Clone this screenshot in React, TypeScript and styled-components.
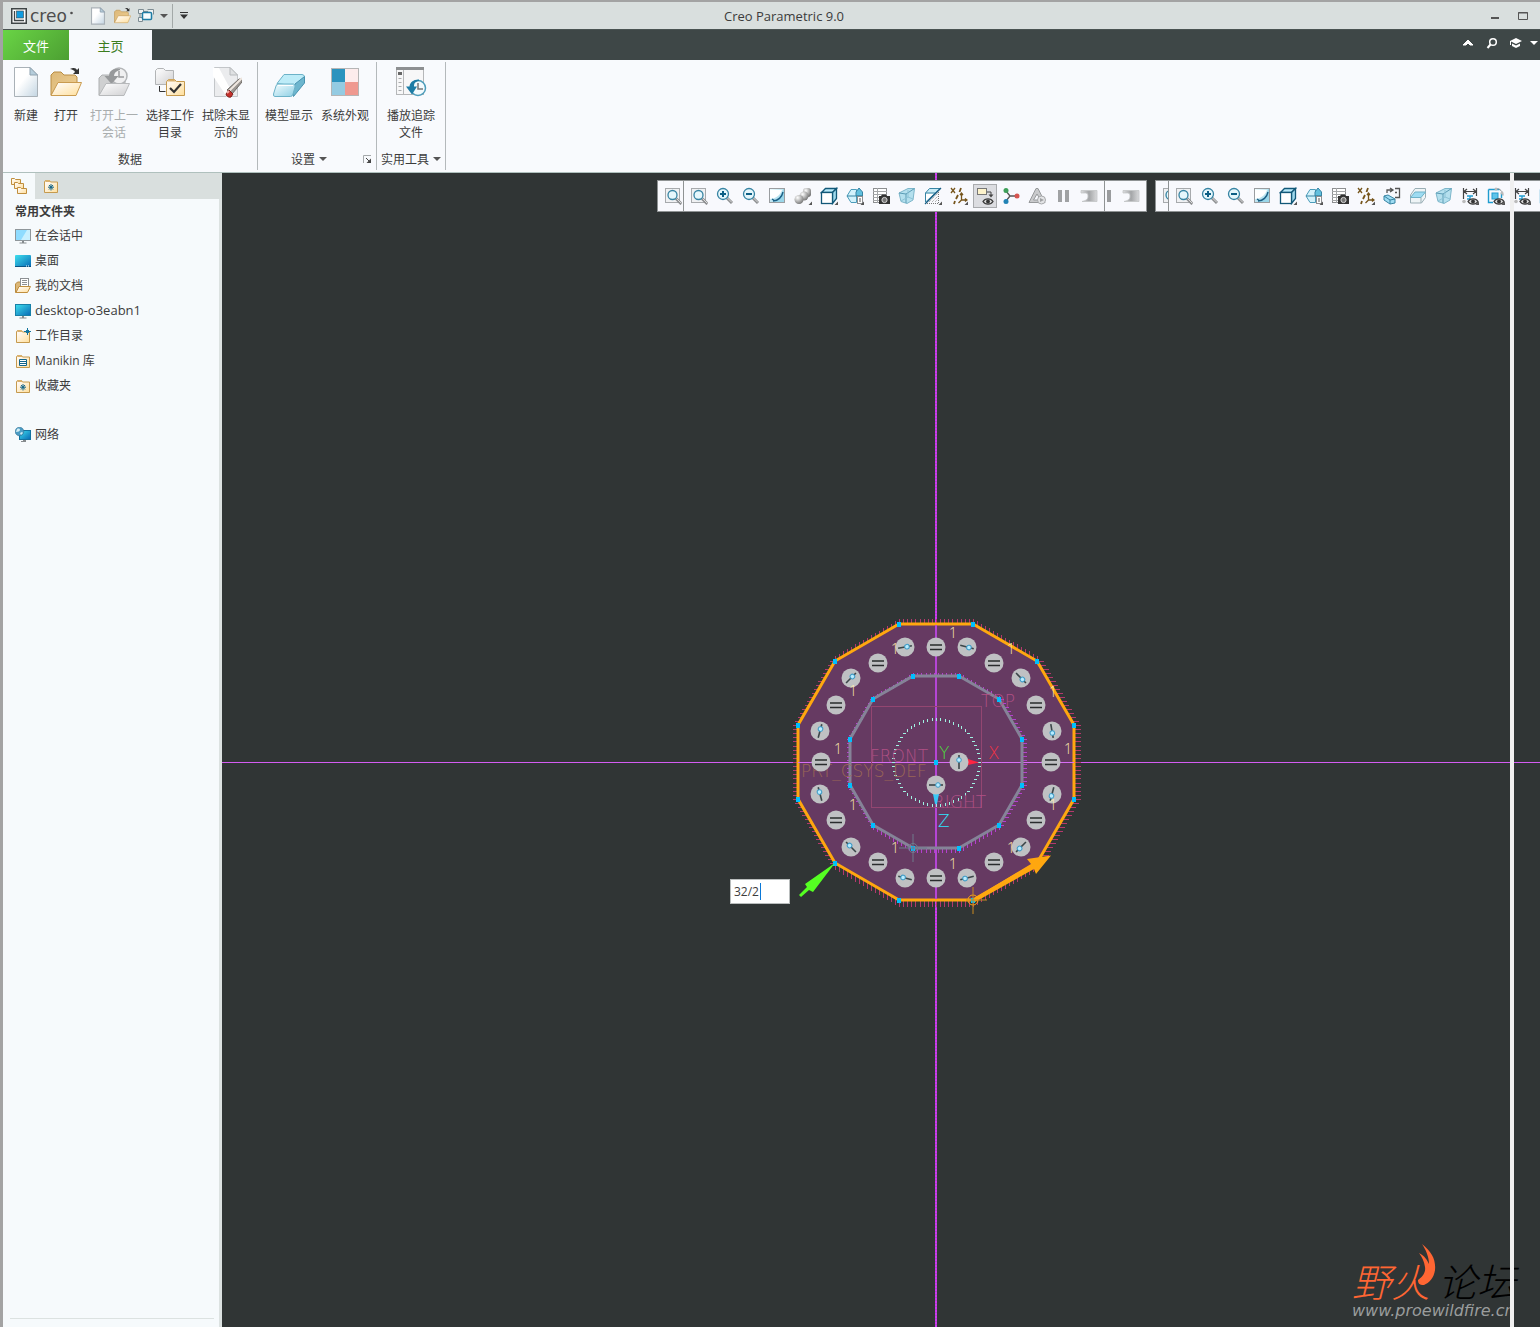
import React from "react";
import styled, { createGlobalStyle } from "styled-components";

const uiFont = `"Open Sans", "Noto Sans CJK SC", sans-serif`;

const GlobalStyle = createGlobalStyle`
  * { box-sizing: border-box; }
  body { margin: 0; font-family: ${uiFont}; font-size: 12px; color: #3c3c3c; }
  button { font: inherit; color: inherit; background: none; border: 0; padding: 0; margin: 0; }
  svg { display: block; flex: none; }
`;

/* ---------- frame ---------- */

const Window = styled.div`
  display: flex;
  flex-direction: column;
  min-height: 100vh;
  border-left: 3px solid #a3a3a3;
  border-top: 2px solid #a3a3a3;
  background: #f8fafd;
  overflow: hidden;
`;

const TitleBar = styled.header`
  display: flex;
  align-items: center;
  height: 28px;
  background: #d9dfde;
  border-bottom: 1px solid #4a5352;
`;

const Brand = styled.div`
  display: flex;
  align-items: center;
  gap: 3px;
  width: 85px;
  padding-left: 8px;
`;

const BrandName = styled.span`
  font-family: "DejaVu Sans", sans-serif;
  font-size: 17px;
  line-height: 20px;
  color: #4d4d4d;
`;

const QuickBar = styled.div`
  display: flex;
  align-items: center;
  gap: 4px;
  width: 102px;
`;

const QuickButton = styled.button<{ $narrow?: boolean }>`
  display: flex;
  flex: none;
  align-items: center;
  justify-content: center;
  width: ${(p) => (p.$narrow ? 8 : 20)}px;
  height: 24px;
`;

const QuickDivider = styled.span`
  flex: none;
  width: 1px;
  height: 24px;
  margin-right: 3px;
  background: #a3a9a8;
`;

const WindowTitle = styled.h1`
  flex: 1;
  margin: 0;
  font-size: 13px;
  font-weight: 400;
  text-align: center;
  line-height: 20px;
`;

const WindowButtons = styled.div`
  display: flex;
  justify-content: flex-end;
  gap: 8px;
  width: 162px;
  padding-right: 7px;
`;

const TabBar = styled.nav`
  display: flex;
  height: 30px;
  background: #3e4747;
`;

const FileTab = styled.button`
  width: 66px;
  font-size: 13px;
  color: #fff;
  background: linear-gradient(135deg, #69d445, #4c9f32);
`;

const HomeTab = styled.button`
  width: 83px;
  font-size: 13px;
  color: #3c7d1f;
  background: #f8fafd;
`;

const TabTools = styled.div`
  display: flex;
  align-items: center;
  gap: 4px;
  margin-left: auto;
  padding: 0 2px 4px 0;
`;

/* ---------- ribbon ---------- */

const Ribbon = styled.section`
  display: flex;
  align-items: stretch;
  height: 113px;
  padding: 2px 0;
  border-bottom: 1px solid #afc0bd;
`;

const Group = styled.div<{ $pad?: number }>`
  display: flex;
  flex-direction: column;
  justify-content: space-between;
  padding: 0 ${(p) => p.$pad ?? 3}px;
  border-right: 1px solid #b4b9bb;
`;

const GroupItems = styled.div`
  display: flex;
  justify-content: center;
`;

const Tool = styled.button<{ $wide?: boolean }>`
  display: flex;
  flex-direction: column;
  align-items: center;
  gap: 9px;
  width: ${(p) => (p.$wide ? 56 : 40)}px;
  padding-top: 4px;
  line-height: 17px;
  &:disabled { color: #a9adae; }
`;

const ToolLabel = styled.span`
  width: 48px;
`;

const GroupFooter = styled.div`
  display: flex;
  align-items: center;
  height: 20px;
  padding-bottom: 2px;
`;

const GroupName = styled.span`
  display: flex;
  flex: 1;
  align-items: center;
  justify-content: center;
  gap: 4px;
  line-height: 17px;
`;

const Launcher = styled.button`
  width: 16px;
  height: 10px;
  padding-left: 6px;
`;

/* ---------- body ---------- */

const Body = styled.main`
  display: flex;
  flex: 1;
`;

const Sidebar = styled.aside`
  display: flex;
  flex-direction: column;
  width: 219px;
  background: #f6fafc;
`;

const SideTabs = styled.div`
  display: flex;
  height: 26px;
  background: #d9dfde;
`;

const SideTab = styled.button<{ $active?: boolean }>`
  display: flex;
  align-items: center;
  justify-content: center;
  width: 32px;
  background: ${(p) => (p.$active ? "#f6fafc" : "transparent")};
`;

const SideContent = styled.div`
  display: flex;
  flex: 1;
  flex-direction: column;
  padding: 2px 5px 8px 7px;
  border-right: 3px solid #dce2e1;
`;

const SideHeading = styled.h2`
  margin: 0;
  padding-left: 5px;
  font-size: 12px;
  font-weight: 700;
  line-height: 22px;
`;

const FolderList = styled.ul`
  margin: 0 0 24px;
  padding: 0 0 0 5px;
  list-style: none;
`;

const FolderButton = styled.button`
  display: flex;
  align-items: center;
  gap: 4px;
  height: 25px;
  font-size: 12px;
`;

const FolderName = styled.span<{ $latin?: boolean }>`
  font-size: ${(p) => (p.$latin ? 13 : 12)}px;
  line-height: 25px;
`;

const SideRule = styled.hr`
  width: 100%;
  margin: auto 0 0;
  border: 0;
  border-top: 1px solid #dce2e1;
`;

/* ---------- graphics area ---------- */

const Viewport = styled.section`
  position: relative;
  flex: 1;
  overflow: hidden;
  background: #303535;
`;

const Scene = styled.svg`
  position: absolute;
  inset: 0;
  width: 100%;
  height: 100%;
`;

const Toolbars = styled.div`
  position: absolute;
  top: 7px;
  left: 435px;
  display: flex;
  gap: 8px;
`;

const Toolbar = styled.div`
  display: flex;
  flex: none;
  height: 32px;
  background: #f8f9fd;
  border: 1px solid #8f9394;
`;

const Segment = styled.div<{ $clip?: number }>`
  display: flex;
  flex: none;
  align-items: center;
  padding: 0 2px;
  ${(p) => (p.$clip ? `width: ${p.$clip}px; overflow: hidden;` : "")}
  & + & { border-left: 1px solid #8f9394; }
`;

const ViewButton = styled.button<{ $pressed?: boolean }>`
  display: flex;
  flex: none;
  align-items: center;
  justify-content: center;
  width: 24px;
  height: 24px;
  margin: 0 1px;
  background: ${(p) => (p.$pressed ? "#dcdde1" : "none")};
  box-shadow: ${(p) => (p.$pressed ? "inset 0 0 0 1px #a9abae" : "none")};
`;

const CutBar = styled.span`
  width: 4px;
  height: 12px;
  margin-right: 7px;
  background: #9a9c9e;
`;

const EdgeStrip = styled.div`
  position: absolute;
  top: 0;
  bottom: 0;
  right: 26px;
  width: 4px;
  background: #f0f0f0;
`;

const ValueBox = styled.label`
  position: absolute;
  left: 508px;
  top: 706px;
  display: flex;
  width: 60px;
  height: 25px;
`;

const ValueInput = styled.input`
  width: 100%;
  padding: 0 3px;
  font-family: ${uiFont};
  font-size: 12px;
  color: #3c3c3c;
  background: #fff;
  border: 1px solid #b9bdbd;
  outline: none;
`;

const Caret = styled.span`
  position: absolute;
  left: 30px;
  top: 4px;
  width: 1px;
  height: 17px;
  background: #0a78d7;
`;

const Watermark = styled.div`
  position: absolute;
  right: 24px;
  bottom: 7px;
  display: flex;
  flex-direction: column;
  font-style: italic;
`;

const MarkWords = styled.div`
  display: flex;
  gap: 8px;
  font-family: "Noto Sans CJK SC", sans-serif;
  font-size: 39px;
  font-weight: 300;
  line-height: 44px;
`;

const MarkWord = styled.span<{ $hot?: boolean }>`
  color: ${(p) => (p.$hot ? "#ff6633" : "#000")};
`;

const MarkFlame = styled.svg`
  position: absolute;
  left: 63px;
  top: -14px;
`;

const MarkUrl = styled.span`
  font-family: "DejaVu Sans", sans-serif;
  font-size: 16px;
  line-height: 18px;
  color: #9a9d9d;
`;

/* ---------- icons ---------- */

const Gradients = () => (
  <svg width="0" height="0" style={{ position: "absolute" }} aria-hidden="true">
    <defs>
      <linearGradient id="gPage" x1="0" y1="0" x2="1" y2="1">
        <stop offset="0.4" stopColor="#fff" /><stop offset="1" stopColor="#c3d5e2" />
      </linearGradient>
      <linearGradient id="gFolder" x1="0" y1="0" x2="1" y2="1">
        <stop offset="0.2" stopColor="#fff8ee" /><stop offset="1" stopColor="#ffdf9b" />
      </linearGradient>
      <linearGradient id="gBack" x1="0" y1="0" x2="1" y2="1">
        <stop offset="0" stopColor="#dcb878" /><stop offset="1" stopColor="#efcf94" />
      </linearGradient>
      <linearGradient id="gGrey" x1="0" y1="0" x2="1" y2="1">
        <stop offset="0.2" stopColor="#f6f6f7" /><stop offset="1" stopColor="#cfcfd1" />
      </linearGradient>
      <linearGradient id="gMute" x1="0" y1="0" x2="1" y2="0">
        <stop offset="0" stopColor="#dcdddf" /><stop offset="0.5" stopColor="#a3a5a7" /><stop offset="1" stopColor="#d8d9db" />
      </linearGradient>
      <linearGradient id="gSky" x1="0" y1="0" x2="1" y2="1">
        <stop offset="0" stopColor="#f4fdff" /><stop offset="1" stopColor="#8ccfe4" />
      </linearGradient>
      <linearGradient id="gScreen" x1="0" y1="0" x2="1" y2="1">
        <stop offset="0" stopColor="#3fe0ee" /><stop offset="1" stopColor="#0769b5" />
      </linearGradient>
      <radialGradient id="gBall" cx="0.35" cy="0.3" r="0.8">
        <stop offset="0" stopColor="#fff" /><stop offset="1" stopColor="#6b6b6b" />
      </radialGradient>
    </defs>
  </svg>
);

type IconProps = { size?: number };

const PageIcon = ({ size = 32 }: IconProps) => (
  <svg width={size} height={size} viewBox="0 0 32 32">
    <path d="M4.5 1.5H20l7.5 7.5V30.5H4.5z" fill="url(#gPage)" stroke="#a9b1b7" strokeWidth={size > 20 ? 1 : 2} />
    <path d="M20 1.5V9h7.5z" fill="#b5cddb" stroke="#8fa3b0" strokeWidth={size > 20 ? 1 : 1.6} />
  </svg>
);

const OpenIcon = ({ size = 32 }: IconProps) => (
  <svg width={size} height={size} viewBox="0 0 32 32">
    <path d="M1 29V9l3-3h7l3 3h11l2 2v6H9z" fill="url(#gBack)" stroke="#b98c42" />
    <path d="M8 16.5h23.5L26 29.5H1z" fill="url(#gFolder)" stroke="#c99b50" />
    <path d="M20 3c4-2 6-1 7 1l2-2v6h-6l2-2c-1-2-2-2-5-3z" fill="#333" />
  </svg>
);

const ReopenIcon = () => (
  <svg width="32" height="32" viewBox="0 0 32 32">
    <path d="M1 29V12l3-3h7l3 3h13v6H9z" fill="#cfd0d1" stroke="#aeb0b2" />
    <circle cx="21" cy="10" r="8" fill="#f0f0f1" stroke="#b3b5b7" strokeWidth="1.5" />
    <path d="M21 5v6h5" fill="none" stroke="#9a9c9e" strokeWidth="1.5" />
    <path d="M22 3C15 2 11 5 11 10H6.5l7 8 7-8H16c0-3 2-5 6-6z" fill="#97999b" />
    <path d="M8 17.5h23.5L26 29.5H1z" fill="url(#gGrey)" stroke="#b7b9bb" />
  </svg>
);

const WorkDirIcon = () => (
  <svg width="32" height="32" viewBox="0 0 32 32">
    <path d="M1.5 18.5v-14l2-2h6l2 2h8v14z" fill="url(#gGrey)" stroke="#b2b4b6" />
    <path d="M5.5 20v5.5h6" fill="none" stroke="#333" />
    <path d="M12.5 29.5v-14l2-2h6l2 2h8v14z" fill="url(#gFolder)" stroke="#c59a4e" />
    <path d="M13 15.5l2-2h5l2 2z" fill="#d9b06c" />
    <path d="M16 22l4 4 7-8" fill="none" stroke="#333" strokeWidth="2.2" />
  </svg>
);

const EraseIcon = () => (
  <svg width="32" height="32" viewBox="0 0 32 32">
    <path d="M4.5 1.5H20l7.5 7.5V30.5H4.5z" fill="#ebecee" stroke="#c3c6c9" />
    <path d="M20 1.5V9h7.5z" fill="#dfe1e3" stroke="#b7babd" />
    <path d="M3 2h6l14 26-6 3L3 10z" fill="#fff" />
    <path d="M29 13h3v3L22 28l-5-4z" fill="#9b9793" stroke="#6f6a66" />
    <path d="M32 12L19 25" stroke="#efe7e0" strokeWidth="2" />
    <path d="M19 24l4 4-2 3c-2 1-5-1-5-3z" fill="#c4302b" stroke="#7d2320" />
    <path d="M17 27l2-2" stroke="#f3b0aa" strokeWidth="2" />
  </svg>
);

const ModelIcon = () => (
  <svg width="32" height="32" viewBox="0 0 32 32">
    <path d="M11 8.5h18q2 0 2.5 2L22 20 4 17.5z" fill="#bdecf8" stroke="#6cb2c8" />
    <path d="M31.5 10.5V17L20.5 30.5l-1-6L22 18z" fill="#6db6ce" stroke="#4a94b0" />
    <path d="M5 18h15.5q2 0 1.5 3l-2 7q-.5 2.5-2.5 2.5H2q-2 0-1.5-2.5l2.5-8q.5-2 2-2z" fill="url(#gSky)" stroke="#6cb2c8" />
    <path d="M5 19.5h15" stroke="#fff" />
  </svg>
);

const AppearanceIcon = () => (
  <svg width="32" height="32" viewBox="0 0 32 32" shapeRendering="crispEdges">
    <rect x="2" y="2" width="28" height="28" fill="#b5b5b5" />
    <rect x="3" y="3" width="13" height="13" fill="#2c93be" />
    <rect x="16" y="3" width="13" height="13" fill="#fdecec" />
    <rect x="3" y="16" width="13" height="13" fill="#94cbe2" />
    <rect x="16" y="16" width="13" height="13" fill="#ef9990" />
  </svg>
);

const TrailIcon = () => (
  <svg width="32" height="32" viewBox="0 0 32 32">
    <rect x="1.5" y="1.5" width="27" height="27" fill="#f7f7f8" stroke="#b5b7b9" />
    <rect x="1" y="1" width="28" height="3" fill="#8d8f91" />
    <path d="M8.5 4v24" stroke="#b5b7b9" />
    <path d="M3.5 12.5h3M3.5 16.5h3M3.5 20.5h3M3.5 24.5h3" stroke="#a9abad" />
    <rect x="3" y="6" width="4" height="3" fill="#666" />
    <circle cx="23" cy="22" r="7.5" fill="#f2fafd" stroke="#4b9cba" strokeWidth="1.5" />
    <path d="M23 17v6h5" fill="none" stroke="#777" strokeWidth="1.5" />
    <path d="M24 13.5c-6 0-9 3-9.5 7H11l6 8 5-8h-3c0-3 1-5 5-5.5z" fill="#1d7ca5" />
  </svg>
);

const WindowsIcon = () => (
  <svg width="16" height="16" viewBox="0 0 16 16">
    <path d="M.5 1.5h5v4h-5zM9.5 1.5h6v5M.5 9.5h4v4h-4z" fill="#eef1f2" stroke="#7d8c92" />
    <path d="M2 5.5v4M5 3.5h5" stroke="#7d8c92" />
    <rect x="4.5" y="4.5" width="9" height="7" rx="1" fill="#f4fbfd" stroke="#1d7ca5" strokeWidth="1.5" />
  </svg>
);

const CaretDown = ({ size = 8, color = "#555" }: { size?: number; color?: string }) => (
  <svg width={size} height="4" viewBox="0 0 8 4"><path d="M0 0h8L4 4z" fill={color} /></svg>
);

const MiniFolder = ({ children }: { children?: React.ReactNode }) => (
  <svg width="16" height="16" viewBox="0 0 16 16">
    <path d="M1.5 14.5V3.5l1-1h4l1 1.5h7v10.5z" fill="url(#gFolder)" stroke="#c59a4e" />
    <path d="M2 4l1-2h3.5L8 4z" fill="#d9b06c" />
    {children}
  </svg>
);

const Asterisk = () => (
  <path d="M8 6v6.5M5 9.2h6M6 7l4 4.5M10 7l-4 4.5" stroke="#12658a" strokeWidth="1" />
);

const TreeIcon = () => (
  <svg width="18" height="18" viewBox="0 0 18 18">
    {[[1, 1], [4, 5], [7, 10]].map(([x, y]) => (
      <path key={x} transform={`translate(${x} ${y})`} d="M.5 6.5v-6h3l1 1h5v5z" fill="url(#gFolder)" stroke="#c08f3e" />
    ))}
  </svg>
);

const MonitorIcon = ({ light }: { light?: boolean }) => (
  <svg width="16" height="16" viewBox="0 0 16 16">
    <rect x=".5" y="1.5" width="15" height="11" fill={light ? "#8fdcff" : "url(#gScreen)"} stroke={light ? "#8f979b" : "#1780a8"} />
    {light && <path d="M6 12l6-10h3v10z" fill="#c8f0ff" />}
    <path d="M7 13h2v1.5h2.5v1h-7v-1H7z" fill="#868b8e" />
  </svg>
);

const DesktopIcon = () => (
  <svg width="16" height="16" viewBox="0 0 16 16">
    <rect x="0" y="2" width="16" height="12" rx="1" fill="url(#gScreen)" />
    <path d="M0 13.5h16" stroke="#0b5484" />
    <path d="M11 13h1M13 13h1" stroke="#fff" />
  </svg>
);

const DocsIcon = () => (
  <svg width="16" height="16" viewBox="0 0 16 16">
    <path d="M.5 14.5V6l2-2h3v5z" fill="#dcb878" stroke="#b98c42" />
    <rect x="5.5" y=".5" width="8" height="9" fill="#fff" stroke="#8c9093" />
    <path d="M7 2.5h5M7 4.5h5M7 6.5h5" stroke="#8c9093" />
    <path d="M4 8.5h11.5l-3 6H1z" fill="url(#gFolder)" stroke="#c08f3e" />
  </svg>
);

const NetworkIcon = () => (
  <svg width="16" height="16" viewBox="0 0 16 16">
    <rect x="4.5" y="3.5" width="11" height="9" fill="url(#gScreen)" stroke="#1273a0" />
    <path d="M8 13h3v2H6v-1h2z" fill="#868b8e" />
    <circle cx="4.5" cy="4.5" r="4.3" fill="#4a9cc4" stroke="#2f6f92" strokeWidth=".6" />
    <path d="M2 2c2-1 3 0 3 1S3 5 1 5zM5 6l2-1 1 1-2 2z" fill="#d4eef5" />
  </svg>
);

/* View toolbar glyphs, drawn on an 18px grid */

const Lens = ({ cx, cy, r = 5 }: { cx: number; cy: number; r?: number }) => (
  <>
    <path d={`M${cx + 3.5} ${cy + 3.5}l5.5 5.5`} stroke="#8d8f91" strokeWidth="3" />
    <path d={`M${cx + 4} ${cy + 3.5}l5 5`} stroke="#dcdcdc" strokeWidth="1" />
    <circle cx={cx} cy={cy} r={r} fill="#e6f7fc" stroke="#3784a3" strokeWidth="1.3" />
  </>
);

const Corner = () => <path d="M18 14.5v3.5h-3.5z" fill="#555" />;
const Eye = () => (
  <>
    <path d="M7 14.5c2-3.5 8-3.5 10 0-2 3.5-8 3.5-10 0z" fill="#d5d5d5" stroke="#3c3c3c" strokeWidth="1.3" />
    <circle cx="12" cy="14.5" r="1.9" fill="#333" />
  </>
);

const glyphs: Record<string, React.ReactNode> = {
  refit: (
    <>
      <rect x="1.5" y="1.5" width="14" height="14" fill="#f0f1f3" stroke="#a7aaad" />
      <Lens cx={8.5} cy={8} r={4.5} />
    </>
  ),
  zoomIn: (<><Lens cx={7} cy={7} r={5.5} /><path d="M4 7h6M7 4v6" stroke="#0d5f85" strokeWidth="2" /></>),
  zoomOut: (<><Lens cx={7} cy={7} r={5.5} /><path d="M4 7h6" stroke="#0d5f85" strokeWidth="2" /></>),
  repaint: (
    <>
      <rect x="1.5" y="1.5" width="15" height="14" fill="url(#gSky)" stroke="#9a9da0" />
      <path d="M2 3h12C12 8 9 11 2 12z" fill="#fff" />
      <path d="M16 2v13H5C11 14 15 9 15 2z" fill="#9ad6e9" />
      <path d="M5 14c5 0 9-4 10-9M4 12l3 2" fill="none" stroke="#1a5f85" strokeWidth="1.4" />
    </>
  ),
  shade: (
    <>
      <rect x="9" y="1" width="8" height="9" rx="3" fill="url(#gBall)" />
      <circle cx="10" cy="9" r="4.5" fill="url(#gBall)" />
      <circle cx="5" cy="12.5" r="4.5" fill="url(#gBall)" />
      <Corner />
    </>
  ),
  box: (
    <>
      <path d="M1.5 5.5l4-4h11l-4 4z" fill="#b9eafa" stroke="#125878" strokeWidth="1.3" />
      <path d="M12.5 5.5l4-4v10l-4 5z" fill="#9fd9ec" stroke="#125878" strokeWidth="1.3" />
      <rect x="1.5" y="5.5" width="11" height="11" fill="#fff" stroke="#125878" strokeWidth="1.3" />
      <Corner />
    </>
  ),
  saved: (
    <>
      <path d="M5 2.5h5.5v13H5L1 9z" fill="#d3f2fb" stroke="#4b9cba" />
      <path d="M10 9V5l3-4 3.5 4v4z" fill="#62c0de" stroke="#3784a3" />
      <path d="M1 9h15.5" stroke="#3784a3" />
      <rect x="11.5" y="9.5" width="5" height="7" fill="#fff" stroke="#8d8f91" />
      <path d="M13 12h2M13 14h2" stroke="#555" />
      <Corner />
    </>
  ),
  views: (
    <>
      <rect x="1.5" y="1.5" width="13" height="14" fill="#fff" stroke="#8d8f91" />
      <path d="M1 4.5h14M1 7.5h14M1 10.5h14M1 13.5h14M5.5 1v15" stroke="#a5a7a9" />
      <path d="M7 9h2l1-1.5h4L15 9h3v8H7z" fill="#333" />
      <circle cx="12.5" cy="13" r="2.6" fill="#777" stroke="#d5d5d5" />
    </>
  ),
  persp: (
    <>
      <path d="M1 6l9-4.5h6.5L15 13l-6 3.5-6-2z" fill="#b4e0ee" stroke="#7db6ca" />
      <path d="M1 6l7 1v9M8 7l8.5-5.5" fill="none" stroke="#5b9cb5" />
      <path d="M10 3v7l5 2M3 14l7-4" fill="none" stroke="#8cc3d6" />
    </>
  ),
  section: (
    <>
      <path d="M14.5 3v13.5H3" fill="none" stroke="#777" strokeDasharray="1 1" />
      <path d="M5 15l9-9M8 15l6-6M11 15l3-3" stroke="#999" strokeDasharray="1 1" />
      <path d="M1.5 15V6l4-4.5H16z" fill="#c9ecf7" stroke="#3784a3" />
      <path d="M2 6.5h8L2 14z" fill="#fff" />
      <path d="M1.5 6h9.5" stroke="#3784a3" />
      <path d="M1 17L17 1" stroke="#1a5f85" strokeWidth="1.3" />
      <Corner />
    </>
  ),
  datum: (
    <>
      <path d="M1 1l4 5M5 1L1 6" stroke="#76551c" strokeWidth="1.3" />
      <path d="M11 1L9.5 5M8 8l-2 4M5 14l-1 3" stroke="#76551c" strokeWidth="1.8" />
      <path d="M11.5 6v7H17M11.5 13l-3 3M10 8l1.5-2L13 8M15 11.5l2 1.5-2 1.5" fill="none" stroke="#76551c" strokeWidth="1.3" />
      <Corner />
    </>
  ),
  annot: (
    <>
      <rect x="1.5" y="1.5" width="9" height="6" fill="#fdf3cc" stroke="#777" />
      <path d="M11 5h4v4" fill="none" stroke="#444" /><path d="M12.5 7.5h5L15 10.5z" fill="#444" />
      <Eye />
    </>
  ),
  spin: (
    <>
      <path d="M4 4l4 5-4 5M8 9h6" fill="none" stroke="#555" strokeWidth="1.3" />
      <circle cx="4" cy="3.5" r="2.5" fill="#3fa05a" /><circle cx="15" cy="9" r="2.5" fill="#d65550" />
      <circle cx="4" cy="14.5" r="2.5" fill="#2283b5" />
    </>
  ),
  sim: (
    <>
      <path d="M8 1.5h2L17 15.5H1z" fill="#c9cacc" stroke="#97999b" />
      <path d="M9 7l3.5 6h-7z" fill="#f8f9fd" stroke="#97999b" />
      <circle cx="13.5" cy="13" r="4" fill="#e3e4e6" stroke="#a7a9ab" /><path d="M12 11l4 2-4 2z" fill="#a0a2a4" />
    </>
  ),
  pause: <path d="M4 3h4v12H4zM11 3h4v12h-4z" fill="#a0a2a4" />,
  resume: (
    <path d="M1 3.5h16v11H2c4-1 6-2 6-5.5S6 6 1 6z" fill="url(#gMute)" stroke="#c3c5c7" strokeWidth=".8" />
  ),
  orient: (
    <>
      <path d="M4 6V3h5M7 1l3 2-3 2M12 1.5h4.5v9H12M12 5.5h2" fill="none" stroke="#555" strokeWidth="1.3" />
      <path d="M1 9l4-1 7 4v4l-5 1-6-4z" fill="#9edcf2" stroke="#3784a3" />
      <path d="M1 9l6 4 5-1M7 13v4" fill="none" stroke="#3784a3" />
    </>
  ),
  slab: (
    <>
      <path d="M6 1.5h10.5v9l-4 5.5h-11V8z" fill="#eef4f6" stroke="#9aaeb5" />
      <path d="M1.5 10.5L6 5h10.5L12 10.5z" fill="#9edcf2" stroke="#6fb2c8" />
      <path d="M12 10.5V16" stroke="#9aaeb5" />
    </>
  ),
  dims: (
    <>
      <path d="M2.5 1v11M15.5 1v8M3 4.5h12M6 2L3 4.5 6 7M12 2l3 2.5L12 7" fill="none" stroke="#444" strokeWidth="1.2" />
      <path d="M6 9h6M9 9v3M6 12h3" fill="none" stroke="#1f9ccf" strokeWidth="1.3" />
      <circle cx="3" cy="14.5" r="1.8" fill="#bbb" />
      <Eye /><Corner />
    </>
  ),
  visible: (
    <>
      <path d="M1.5 2.5h11M1.5 2.5v13H6M14.5 6v5" fill="none" stroke="#1f9ccf" strokeWidth="1.4" />
      <rect x="5" y="6" width="6" height="6" fill="#5fc3ea" stroke="#1f9ccf" />
      <path d="M9 1.5c4 0 7 3 7 7" fill="none" stroke="#8d8f91" />
      <circle cx="9" cy="2" r="1.5" fill="#bbb" /><circle cx="15" cy="6" r="1.5" fill="#bbb" />
      <Eye /><Corner />
    </>
  ),
};

const Glyph = ({ name }: { name: string }) => (
  <svg width="18" height="18" viewBox="0 0 18 18">{glyphs[name]}</svg>
);

const graphicsTools = ["refit", "zoomIn", "zoomOut", "repaint", "shade", "box", "saved", "views", "persp", "section", "datum", "annot", "spin", "sim", "pause", "resume"];
const sketchTools = ["refit", "zoomIn", "zoomOut", "repaint", "box", "saved", "views", "datum", "orient", "slab", "persp", "dims", "visible", "dims", "visible"];

const ViewTools = ({ names }: { names: string[] }) => (
  <>
    {names.map((n, i) => (
      <ViewButton key={i} aria-label={n} $pressed={n === "annot"}><Glyph name={n} /></ViewButton>
    ))}
  </>
);

/* ---------- sketch geometry, centred on the origin ---------- */

type Pt = [number, number];

const ring = (a: number, b: number, c: number): Pt[] => [
  [a, -c], [b, -b], [c, -a], [c, a], [b, b], [a, c],
  [-a, c], [-b, b], [-c, a], [-c, -a], [-b, -b], [-a, -c],
];
const outer = ring(37, 101, 138);
const inner = ring(23, 63, 86);
const poly = (pts: Pt[]) => pts.map((p) => p.join(",")).join(" ");

const hatch = (pts: Pt[], step: number, len: number) =>
  pts.map(([x1, y1], i) => {
    const [x2, y2] = pts[(i + 1) % pts.length];
    const dx = x2 - x1;
    const dy = y2 - y1;
    const flat = Math.abs(dx) > Math.abs(dy);
    const n = Math.floor(Math.max(Math.abs(dx), Math.abs(dy)) / step);
    let d = "";
    for (let k = 0; k <= n; k++) {
      const x = Math.round(x1 + (dx * k) / n) + 0.5;
      const y = Math.round(y1 + (dy * k) / n) + 0.5;
      d += flat ? `M${x} ${y}v${y1 + y2 < 0 ? -len : len}` : `M${x} ${y}h${x1 + x2 < 0 ? -len : len}`;
    }
    return d;
  }).join("");

const dotted = Array.from({ length: 60 }, (_, i) => {
  const t = (i * Math.PI) / 30;
  const x = Math.round(43 * Math.cos(t)) + 0.5;
  const y = Math.round(43 * Math.sin(t)) + 0.5;
  return Math.abs(y) > Math.abs(x) ? `M${x} ${y - 1.5}v3` : `M${x - 1.5} ${y}h3`;
}).join("");

const equals: Pt[] = [
  [0, -115], [58, -99], [100, -57], [115, 0], [100, 58], [58, 100],
  [0, 116], [-58, 100], [-100, 58], [-115, 0], [-100, -57], [-58, -99],
];

const pins: [number, number, number][] = [
  [31, -115, 15], [85, -84, 45], [116, -31, 80], [116, 32, 105], [85, 85, 135], [31, 116, 165],
  [-31, 116, 195], [-85, 85, 225], [-116, 32, 255], [-116, -31, 285], [-85, -84, 315], [-31, -115, 350],
  [23, 0, 270], [0, 23, 0],
];

const ones: Pt[] = [
  [16, -125], [74, -109], [116, -66], [131, -9], [116, 47], [74, 90],
  [16, 106], [-42, 90], [-84, 47], [-99, -9], [-84, -67], [-42, -109],
];

const Label = styled.text<{ $tone: string }>`
  fill: ${(p) => p.$tone};
  font-family: "DejaVu Sans", sans-serif;
  font-weight: 200;
  font-size: 17px;
`;

const EdgeCount = styled.text`
  fill: #ffedb0;
  font-family: "Open Sans", sans-serif;
  font-weight: 300;
  font-size: 14px;
`;

const Sketch = () => (
  <Scene aria-label="sketch">
    <path d="M0 589.5H4000" stroke="#d45cf2" />
    <path d="M714 0V4000" stroke="#a94fc6" strokeWidth="2" />
    <path d="M714 0V4000" stroke="#d236f5" strokeWidth="2" strokeDasharray="2 1" />
    <g transform="translate(714 589)">
      <path d={hatch(outer, 4, 6)} stroke="#b5386c" shapeRendering="crispEdges" />
      <polygon points={poly(outer)} fill="#663a62" stroke="#ffa70f" strokeWidth="3" />
      <path d="M-138 .5H138" stroke="#d86cf5" />
      <path d="M0-137V137" stroke="#b545d6" strokeWidth="2" />
      <rect x="-64.5" y="-55.5" width="110" height="101" fill="none" stroke="#934671" />
      <path d={hatch(inner, 4, 4)} stroke="#b540cf" shapeRendering="crispEdges" />
      <polygon points={poly(inner)} fill="none" stroke="#858398" strokeWidth="3" />
      <path d={dotted} stroke="#9ff3e2" shapeRendering="crispEdges" />
      <Label x="45" y="-55" $tone="#b05085">TOP</Label>
      <Label x="-66" y="0" $tone="#b05085">FRONT</Label>
      <Label x="-3" y="46" $tone="#b05085">RIGHT</Label>
      <Label x="-135" y="15" $tone="#9a6656">PRT_CSYS_DEF</Label>
      <Label x="3" y="-3" $tone="#4ddc3c">Y</Label>
      <Label x="52" y="-3" $tone="#ec3345">X</Label>
      <Label x="2" y="65" $tone="#2fe3ff">Z</Label>
      <path d="M32-3L43 .5 32 3z" fill="#ff2442" />
      <path d="M-3 32h6L1 42h-2z" fill="#38c8f5" />
      {[...outer, ...inner, [0, 0] as Pt].map(([x, y], i) => (
        <rect key={i} x={x - 2} y={y - 2} width="4" height="5" fill="#00bfff" />
      ))}
      {equals.map(([x, y], i) => (
        <g key={i} transform={`translate(${x} ${y})`}>
          <circle r="9.5" fill="#bfc1c3" />
          <path d="M-6-2H6M-6 2.5H6" stroke="#292c2d" strokeWidth="1.6" />
        </g>
      ))}
      {pins.map(([x, y, a], i) => (
        <g key={i} transform={`translate(${x} ${y})`}>
          <circle r="9.5" fill="#bfc1c3" />
          <g transform={`rotate(${a})`}>
            <path d="M-7 0H7" stroke="#3b4649" strokeWidth="1.6" />
            <circle cx="2" r="2.3" fill="#b8ecff" stroke="#3f9cc7" />
          </g>
        </g>
      ))}
      {ones.map(([x, y], i) => (
        <EdgeCount key={i} x={x - 3} y={y + 1}>1</EdgeCount>
      ))}
      <g fill="none" stroke="#6f7b8c">
        <circle cx="-23" cy="86" r="4.5" />
        <path d="M-23 72v28M-37 86h28" />
      </g>
      <path d="M37 137L95 102 91 97 115 93.5 100 112 98 107 39 140z" fill="#ffa70f" />
      <circle cx="37" cy="138" r="5" fill="none" stroke="#ffa70f" />
      <path d="M37 125v27M30 138h21" stroke="#c98a20" />
      <path d="M-101 101L-131 122l2 3-8 8 2 2 8-7 4 2z" fill="#55ff22" />
    </g>
  </Scene>
);

/* ---------- page ---------- */

const folders: { name: string; icon: React.ReactNode; latin?: boolean }[] = [
  { name: "在会话中", icon: <MonitorIcon light /> },
  { name: "桌面", icon: <DesktopIcon /> },
  { name: "我的文档", icon: <DocsIcon /> },
  { name: "desktop-o3eabn1", icon: <MonitorIcon />, latin: true },
  {
    name: "工作目录",
    icon: <MiniFolder><path d="M12.5 0v7M9 3.5h7M11 2l3 3M14 2l-3 3" stroke="#12749c" /></MiniFolder>,
  },
  {
    name: "Manikin 库",
    icon: <MiniFolder><path d="M4.5 6.5h7v6h-7zM5 8.5h6M5 10.5h6" fill="#fff" stroke="#12658a" /></MiniFolder>,
  },
  { name: "收藏夹", icon: <MiniFolder><Asterisk /></MiniFolder> },
];

export default function App() {
  return (
    <Window>
      <GlobalStyle />
      <Gradients />
      <TitleBar>
        <Brand>
          <svg width="16" height="16" viewBox="0 0 16 16">
            <rect x=".75" y=".75" width="14.5" height="14.5" fill="#fff" stroke="#3f4647" strokeWidth="1.5" />
            <path d="M3.5 3v9.5H13" fill="none" stroke="#3f4647" strokeWidth="1.3" />
            <rect x="5.5" y="3" width="7" height="7" fill="#109be0" stroke="#3f4647" strokeWidth=".6" />
          </svg>
          <BrandName>creo</BrandName>
          <svg width="3" height="12" viewBox="0 0 3 12"><circle cx="1.5" cy="3" r="1.3" fill="#4d4d4d" /></svg>
        </Brand>
        <QuickBar>
          <QuickButton aria-label="新建文件"><PageIcon size={18} /></QuickButton>
          <QuickButton aria-label="打开文件"><OpenIcon size={17} /></QuickButton>
          <QuickButton aria-label="窗口"><WindowsIcon /></QuickButton>
          <QuickButton $narrow aria-label="窗口列表"><CaretDown /></QuickButton>
          <QuickDivider />
          <QuickButton $narrow aria-label="自定义">
            <svg width="8" height="7" viewBox="0 0 8 7"><path d="M0 0h8v1H0zM0 2.5h8L4 7z" fill="#333" /></svg>
          </QuickButton>
        </QuickBar>
        <WindowTitle>Creo Parametric 9.0</WindowTitle>
        <WindowButtons>
          <QuickButton aria-label="最小化">
            <svg width="10" height="10" viewBox="0 0 10 10"><path d="M1 7h8" stroke="#555" strokeWidth="2" /></svg>
          </QuickButton>
          <QuickButton aria-label="最大化">
            <svg width="10" height="10" viewBox="0 0 10 10"><path d="M.5 1.5h9v7h-9zM0 2h10" fill="none" stroke="#555" /></svg>
          </QuickButton>
        </WindowButtons>
      </TitleBar>
      <TabBar>
        <FileTab>文件</FileTab>
        <HomeTab>主页</HomeTab>
        <TabTools>
          <QuickButton aria-label="折叠">
            <svg width="12" height="8" viewBox="0 0 12 8"><path d="M1 6L6 1l5 5H8L6 4 4 6z" fill="#fff" stroke="#fff" /></svg>
          </QuickButton>
          <QuickButton aria-label="搜索">
            <svg width="12" height="12" viewBox="0 0 12 12"><circle cx="7" cy="5" r="3.3" fill="none" stroke="#fff" strokeWidth="1.5" /><path d="M4.5 7.5L1.5 11" stroke="#fff" strokeWidth="2" /></svg>
          </QuickButton>
          <QuickButton aria-label="学习">
            <svg width="14" height="10" viewBox="0 0 14 10"><path d="M7 0l6 3-6 3-6-3z" fill="#fff" /><path d="M3 5.5l4 2 4-2V8L7 10 3 8zM1 3h1v4H1z" fill="#fff" /></svg>
          </QuickButton>
          <QuickButton $narrow aria-label="更多"><CaretDown color="#fff" /></QuickButton>
        </TabTools>
      </TabBar>
      <Ribbon>
        <Group>
          <GroupItems>
            <Tool><PageIcon />新建</Tool>
            <Tool><OpenIcon />打开</Tool>
            <Tool $wide disabled><ReopenIcon /><ToolLabel>打开上一会话</ToolLabel></Tool>
            <Tool $wide><WorkDirIcon /><ToolLabel>选择工作目录</ToolLabel></Tool>
            <Tool $wide><EraseIcon /><ToolLabel>拭除未显示的</ToolLabel></Tool>
          </GroupItems>
          <GroupFooter><GroupName>数据</GroupName></GroupFooter>
        </Group>
        <Group>
          <GroupItems>
            <Tool $wide><ModelIcon /><ToolLabel>模型显示</ToolLabel></Tool>
            <Tool $wide><AppearanceIcon /><ToolLabel>系统外观</ToolLabel></Tool>
          </GroupItems>
          <GroupFooter>
            <GroupName>设置<CaretDown /></GroupName>
            <Launcher aria-label="设置选项">
              <svg width="9" height="9" viewBox="0 0 9 9"><path d="M.5 8V.5H8" fill="none" stroke="#a5a9ab" /><path d="M3 3l4 4" stroke="#444" /><path d="M8 3.5V8H3.5z" fill="#444" /></svg>
            </Launcher>
          </GroupFooter>
        </Group>
        <Group $pad={4}>
          <GroupItems>
            <Tool $wide><TrailIcon /><ToolLabel>播放追踪文件</ToolLabel></Tool>
          </GroupItems>
          <GroupFooter><GroupName>实用工具<CaretDown /></GroupName></GroupFooter>
        </Group>
      </Ribbon>
      <Body>
        <Sidebar>
          <SideTabs>
            <SideTab $active aria-label="文件夹浏览器"><TreeIcon /></SideTab>
            <SideTab aria-label="收藏夹标签"><MiniFolder><Asterisk /></MiniFolder></SideTab>
          </SideTabs>
          <SideContent>
            <SideHeading>常用文件夹</SideHeading>
            <FolderList>
              {folders.map((f) => (
                <li key={f.name}>
                  <FolderButton>{f.icon}<FolderName $latin={f.latin}>{f.name}</FolderName></FolderButton>
                </li>
              ))}
            </FolderList>
            <FolderList>
              <li><FolderButton><NetworkIcon /><FolderName>网络</FolderName></FolderButton></li>
            </FolderList>
            <SideRule />
          </SideContent>
        </Sidebar>
        <Viewport>
          <Sketch />
          <Toolbars>
            <Toolbar>
              <Segment $clip={25}><ViewTools names={["refit"]} /></Segment>
              <Segment><ViewTools names={graphicsTools} /></Segment>
              <Segment><CutBar /><ViewTools names={["resume"]} /></Segment>
            </Toolbar>
            <Toolbar>
              <Segment $clip={12}><ViewTools names={["refit"]} /></Segment>
              <Segment><ViewTools names={sketchTools} /></Segment>
            </Toolbar>
          </Toolbars>
          <ValueBox>
            <ValueInput aria-label="尺寸值" defaultValue="32/2" />
            <Caret />
          </ValueBox>
          <Watermark>
            <MarkWords>
              <MarkWord $hot>野火</MarkWord>
              <MarkWord>论坛</MarkWord>
            </MarkWords>
            <MarkFlame width="24" height="44" viewBox="0 0 24 44">
              <path d="M7 0c10 8 14 16 13 26-1 8-6 13-11 15-5 0-6-2-6-5 4-3 8-7 7-13-1-6-3-10-6-14 6 3 8 7 10 11C14 13 11 6 7 0z" fill="#ff6633" />
            </MarkFlame>
            <MarkUrl>www.proewildfire.cn</MarkUrl>
          </Watermark>
          <EdgeStrip />
        </Viewport>
      </Body>
    </Window>
  );
}
